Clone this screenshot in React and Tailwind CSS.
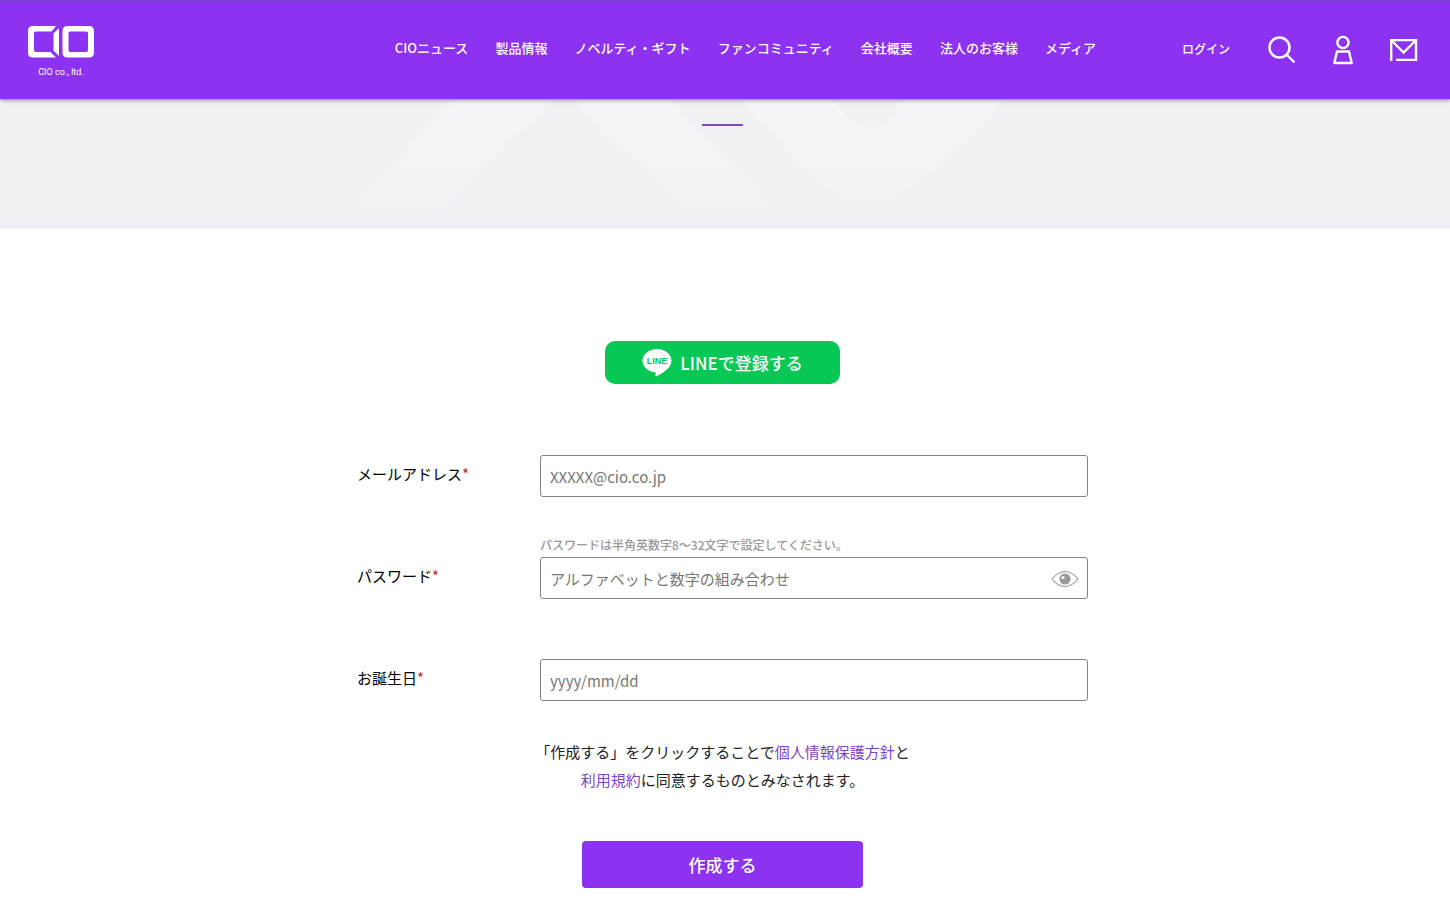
import { useState } from "react";

const NAV_ITEMS = [
  "CIOニュース",
  "製品情報",
  "ノベルティ・ギフト",
  "ファンコミュニティ",
  "会社概要",
  "法人のお客様",
  "メディア"
];

function Logo() {
  return (
    <a href="#" aria-label="CIO co., ltd." className="flex w-[66px] flex-col items-center text-white">
      <svg viewBox="0 0 66 32" className="h-8 w-[66px]" fill="currentColor" aria-hidden="true">
        <path d="M5 0H28L23.500 5.500H8Q6 5.500 6 7.500V24Q6 26 8 26H22.500L28 31.500H5Q0 31.500 0 26.500V5Q0 0 5 0Z" />
        <path d="M31 2V30L25.500 24.500V7.500Z" />
        <path
          fillRule="evenodd"
          d="M39.500 0H61Q66 0 66 5V26.500Q66 31.500 61 31.500H39.500Q34.500 31.500 34.500 26.500V5Q34.500 0 39.500 0ZM42.500 5.500Q40.500 5.500 40.500 7.500V24Q40.500 26 42.500 26H58Q60 26 60 24V7.500Q60 5.500 58 5.500Z"
        />
      </svg>
      <span className="mt-2 font-['Roboto',sans-serif] text-[9px] leading-3 whitespace-nowrap">CIO co., ltd.</span>
    </a>
  );
}

function Header() {
  return (
    <header className="relative z-10 flex h-[99px] items-start border-t border-[#7746c0] bg-[#8d32f0] pr-8 pl-7 text-white shadow-[0_1px_4px_rgba(0,0,0,0.5)]">
      <div className="pt-[25px]">
        <Logo />
      </div>

      <nav className="ml-auto flex gap-[27px] pt-[37px] text-[13px] leading-5 font-medium whitespace-nowrap">
        {NAV_ITEMS.map((item) => (
          <a key={item} href="#">
            {item}
          </a>
        ))}
      </nav>

      <div className="ml-[86px] flex items-center pt-[34px]">
        <a href="#" className="mr-[38px] pb-0.5 text-[12px] leading-5 font-medium whitespace-nowrap">
          ログイン
        </a>
        <button type="button" aria-label="検索" className="mr-9">
          <svg viewBox="0 0 28 28" className="size-7" fill="none" stroke="currentColor" strokeWidth="2.4">
            <circle cx="11.5" cy="11.5" r="10" />
            <path d="M18.500 18.500L26.500 26.500" />
          </svg>
        </button>
        <a href="#" aria-label="アカウント" className="mr-9">
          <svg viewBox="0 0 22 30" className="h-[30px] w-[22px]" fill="none" stroke="currentColor" strokeWidth="2.4">
            <circle cx="11" cy="7.5" r="5.600" />
            <path d="M5 16.500H17L19.700 28H2.300Z" strokeLinejoin="round" />
          </svg>
        </a>
        <a href="#" aria-label="お問い合わせ">
          <svg viewBox="0 0 28 24" className="h-6 w-7" fill="none" stroke="currentColor" strokeWidth="2.4">
            <path d="M1.200 23V2.100H26V21.900H6" />
            <path d="M1.600 2.500L13.600 14.500L25.600 2.500" />
          </svg>
        </a>
      </div>
    </header>
  );
}

function Banner() {
  return (
    <div className="relative h-[130px] overflow-hidden bg-[#f0f0f5]">
      <svg
        viewBox="0 0 1450 130"
        preserveAspectRatio="xMidYMid slice"
        className="absolute inset-0 size-full"
        aria-hidden="true"
      >
        <defs>
          <linearGradient id="bannerFade" x1="0" y1="0" x2="0" y2="130" gradientUnits="userSpaceOnUse">
            <stop offset="0" stopColor="#f6f5f7" />
            <stop offset="0.5" stopColor="#f5f2f7" />
            <stop offset="1" stopColor="#f2eff5" />
          </linearGradient>
        </defs>
        <g fill="url(#bannerFade)">
          <path d="M455 0Q425 25 403 56L362 96L334 130H428L453 104L500 52L543 12Q549 5 548 0Z" />
          <path d="M578 0Q578 8 584 16L630 56L659 84L704 130H796L733 64L669 0Z" />
          <path d="M741 0L800 68L826 88Q869 118 900 94Q925 78 946 61L1004 0H905L886 22Q869 34 850 20L831 0Z" />
        </g>
      </svg>
      <div className="relative mx-auto mt-[25px] h-0.5 w-[41px] -translate-x-[3px] bg-[#7f4db5]" />
    </div>
  );
}

function LineIcon() {
  return (
    <svg viewBox="0 0 30 29" className="h-[29px] w-[30px]" aria-hidden="true">
      <path
        fill="#fff"
        d="M15 1C7 1 .5 6.200 .5 12.700c0 5.800 5.200 10.600 12.200 11.500 1 .2 1.200.8 1 1.800l-.3 1.600c-.1.700.3 1 1 .7C19 26 29.500 20.500 29.500 12.700 29.500 6.200 23 1 15 1Z"
      />
      <text x="15" y="16" textAnchor="middle" fill="#07c755" className="font-['Liberation_Sans',sans-serif] text-[9px] font-bold">
        LINE
      </text>
    </svg>
  );
}

function EyeIcon() {
  return (
    <svg viewBox="0 0 28 18" className="h-[18px] w-7" aria-hidden="true">
      <path d="M1 9Q7 1.500 14 1.500T27 9Q21 16.500 14 16.500T1 9Z" fill="none" stroke="#999" strokeWidth="1.200" />
      <circle cx="14" cy="9" r="5.600" fill="#999" />
      <circle cx="12" cy="7.500" r="1.600" fill="#fff" />
    </svg>
  );
}

function Field({ id, label, hint, children }) {
  return (
    <div className="flex items-end">
      <label htmlFor={id} className="w-[183px] shrink-0 pb-[13px] text-[15px] leading-5 text-black">
        {label}
        <span className="text-[#d0222a]">*</span>
      </label>
      <div className="grow">
        {hint && <p className="mb-1 text-[12px] leading-4 font-medium text-[#999]">{hint}</p>}
        {children}
      </div>
    </div>
  );
}

const inputClass =
  "block h-[42px] w-full rounded-[3px] border border-[#858585] bg-white px-[9px] text-[15px] text-[#222] outline-none placeholder:text-[#777] focus:border-[#8d32f0]";

export default function App() {
  const [showPassword, setShowPassword] = useState(false);

  return (
    <div className="min-h-screen bg-white font-['Noto_Sans_CJK_JP',sans-serif]">
      <Header />
      <Banner />

      <main className="pt-28 pr-[5px] pb-7">
        <form className="mx-auto flex max-w-[731px] flex-col" onSubmit={(event) => event.preventDefault()}>
          <button
            type="button"
            className="flex h-[43px] w-[235px] items-center justify-center gap-2 self-center rounded-[10px] bg-[#07c755] text-[17px] font-medium text-white"
          >
            <LineIcon />
            LINEで登録する
          </button>

          <div className="mt-[71px]">
            <Field id="email" label="メールアドレス">
              <input id="email" type="email" placeholder="XXXXX@cio.co.jp" className={inputClass} />
            </Field>
          </div>

          <div className="mt-10">
            <Field id="password" label="パスワード" hint="パスワードは半角英数字8〜32文字で設定してください。">
              <div className="relative">
                <input
                  id="password"
                  type={showPassword ? "text" : "password"}
                  placeholder="アルファベットと数字の組み合わせ"
                  className={inputClass}
                />
                <button
                  type="button"
                  aria-label="パスワードを表示"
                  onClick={() => setShowPassword(!showPassword)}
                  className="absolute top-[13px] right-[9px]"
                >
                  <EyeIcon />
                </button>
              </div>
            </Field>
          </div>

          <div className="mt-[60px]">
            <Field id="birthday" label="お誕生日">
              <input id="birthday" type="text" placeholder="yyyy/mm/dd" className={inputClass} />
            </Field>
          </div>

          <p className="mt-[37px] text-center text-[15px] leading-7 text-[#222]">
            「作成する」をクリックすることで
            <a href="#" className="text-[#7f45c4]">
              個人情報保護方針
            </a>
            と
            <br />
            <a href="#" className="text-[#7f45c4]">
              利用規約
            </a>
            に同意するものとみなされます。
          </p>

          <button
            type="submit"
            className="mt-[47px] h-[47px] w-[281px] self-center rounded-[4px] bg-[#8d32f0] text-[17px] font-medium text-white"
          >
            作成する
          </button>
        </form>
      </main>
    </div>
  );
}
